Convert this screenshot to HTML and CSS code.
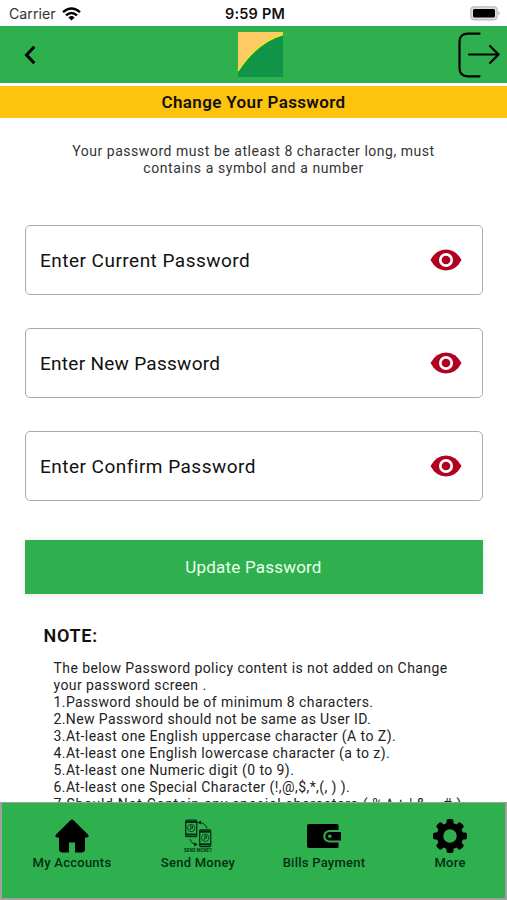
FILE: index.html
```html
<!DOCTYPE html>
<html lang="en">
<head>
<meta charset="utf-8">
<title>Change Your Password</title>
<link rel="stylesheet" href="styles.css">
</head>
<body>
<div class="app">
  <div class="status">
    <div class="carrier"><span>Carrier</span>
      <svg width="19" height="14" viewBox="0 0 19 14"><g fill="none" stroke="#000" stroke-width="2.4"><path d="M1 5.2Q9.500-2.200 18 5.200"/><path d="M4 8.300Q9.500 3.500 15 8.300"/></g><path d="M6.400 10.400Q9.500 7.800 12.600 10.400L9.500 13.600Z"/></svg>
    </div>
    <div class="clock">9:59 PM</div>
    <svg class="battery" width="31" height="15" viewBox="0 0 31 15"><rect x=".8" y=".8" width="26.400" height="13" rx="3.500" fill="#ddd" stroke="#bbb" stroke-width="1.200"/><rect x="3" y="3" width="22" height="8.600" rx="1.500"/><path d="M28.500 5Q31 7.300 28.500 9.600Z" fill="#aaa"/></svg>
  </div>
  <header class="header">
    <svg class="back" width="13" height="20" viewBox="0 0 13 20"><path d="M10.300 1.700L2.500 10l7.800 8.100" fill="none" stroke="#000" stroke-width="3"/></svg>
    <svg class="logo" width="45" height="45" viewBox="0 0 45 45"><path d="M0 0h45v45H0z" fill="#109447"/><path d="M0 0h45v2.500Q19 10 0 39z" fill="#fdca63"/><path d="M0 39Q19 10 45 2.500" fill="none" stroke="#e9ed18" stroke-width="1.500"/></svg>
    <svg class="logout" width="42" height="46" viewBox="0 0 42 46"><path d="M21.500 1.700H10Q1.500 1.700 1.500 10v26q0 8.300 8.500 8.300h11.500M11 22.500h29M32 14l8.500 8.500L32 31" fill="none" stroke="#000" stroke-width="2.200" stroke-linecap="round"/></svg>
  </header>
  <div class="title"><span>Change Your Password</span></div>
  <main>
    <p class="intro"><span class="i1">Your password must be atleast 8 character long, must</span><br><span class="i2">contains a symbol and a number</span></p>
    <div class="fields">
      <div class="field"><span class="f1">Enter Current Password</span><svg width="32" height="22" viewBox="0 0 32 22"><path d="M.5 11Q6 .5 16 .5T31.500 11Q26 21.500 16 21.500T.5 11" fill="#b00120"/><circle cx="16" cy="11" r="5.700" fill="#b00120" stroke="#fff" stroke-width="2.700"/></svg></div>
      <div class="field"><span class="f2">Enter New Password</span><svg width="32" height="22" viewBox="0 0 32 22"><path d="M.5 11Q6 .5 16 .5T31.500 11Q26 21.500 16 21.500T.5 11" fill="#b00120"/><circle cx="16" cy="11" r="5.700" fill="#b00120" stroke="#fff" stroke-width="2.700"/></svg></div>
      <div class="field"><span class="f3">Enter Confirm Password</span><svg width="32" height="22" viewBox="0 0 32 22"><path d="M.5 11Q6 .5 16 .5T31.500 11Q26 21.500 16 21.500T.5 11" fill="#b00120"/><circle cx="16" cy="11" r="5.700" fill="#b00120" stroke="#fff" stroke-width="2.700"/></svg></div>
    </div>
    <button class="update">Update Password</button>
    <h2>NOTE:</h2>
    <div class="policy">
      <div class="p1">The below Password policy content is not added on Change</div>
      <div class="p2">your password screen .</div>
      <div class="p3">1.Password should be of minimum 8 characters.</div>
      <div class="p4">2.New Password should not be same as User ID.</div>
      <div class="p5">3.At-least one English uppercase character (A to Z).</div>
      <div class="p6">4.At-least one English lowercase character (a to z).</div>
      <div class="p7">5.At-least one Numeric digit (0 to 9).</div>
      <div class="p8">6.At-least one Special Character (!,@,$,*,(, ) ).</div>
      <div class="p9">7.Should Not Contain any special characters ( %,^,+,|,&amp;,~,# )</div>
    </div>
  </main>
  <nav>
    <a><svg width="34" height="34" viewBox="0 0 34 34"><path d="M15.500 1.200q1.500-1.400 3 0L33 15.500q1.800 3-1.600 3H30V30q0 3.500-3.500 3.500H20V23.500h-6v10H7.500Q4 33.500 4 30V18.500H2.600q-3.400 0-1.600-3z"/></svg><span class="n1">My Accounts</span></a>
    <a><svg width="30" height="34" viewBox="0 0 30 34"><g fill="none" stroke="#052e12" stroke-width="1.300"><rect x="2.700" y="1.200" width="11" height="16.500" rx="1"/><rect x="16.700" y="11" width="11" height="16.500" rx="1"/><path d="M3 3h10M3 15.500h10M17 12.800h10M17 25.300h10" stroke-width="2"/><circle cx="8.200" cy="9" r="3.700" stroke-width=".8"/><circle cx="22.200" cy="18.800" r="3.700" stroke-width=".8"/><path d="M7 7.200h2.500v2H7.200V11M21 17h2.500v2h-2.300v1.800" stroke-width="1"/><path d="M16 3.500q6 0 8 6M7 20q1 5 7 5.500" stroke-width="1"/></g><path d="M14 3.500l4-2v4zM15 25.500l-4-2v4z" fill="#052e12"/><text x="15" y="32.800" text-anchor="middle" textLength="28" lengthAdjust="spacingAndGlyphs" class="tiny">SEND MONEY</text></svg><span class="n2">Send Money</span></a>
    <a><svg width="34" height="34" viewBox="0 0 34 34"><path d="M2 5H30q1.500 0 1.500 1.500v4.500H22.500a6.250 6.250 0 0 0 0 12.500h9v4.500Q31.500 29 30 29H2Q0 29 0 27V7Q0 5 2 5z"/><path fill-rule="evenodd" d="M22.500 13H34v8.500H22.500a4.250 4.250 0 0 1 0-8.500zm.3 2.500a1.800 1.800 0 1 0 0 3.600a1.800 1.800 0 0 0 0-3.600z"/></svg><span class="n3">Bills Payment</span></a>
    <a><svg width="34" height="34" viewBox="-17 -17 34 34"><circle r="10" fill="none" stroke="#000" stroke-width="6.500"/><g id="t"><rect x="-3.500" y="-17" width="7" height="6" rx="2"/><rect x="-3.500" y="11" width="7" height="6" rx="2"/><rect x="-17" y="-3.500" width="6" height="7" rx="2"/><rect x="11" y="-3.500" width="6" height="7" rx="2"/></g><use href="#t" transform="rotate(45)"/></svg><span class="n4">More</span></a>
  </nav>
</div>
</body>
</html>
```
FILE: styles.css
```css
*{box-sizing:border-box}
body{margin:0;background:#fff;color:#111;font-family:Roboto,sans-serif}
svg{display:block;flex:none;overflow:visible}
.app{width:507px;height:900px;display:flex;flex-direction:column;overflow:hidden}
.status{height:26px;flex:none;display:grid;grid-template-columns:1fr auto 1fr;align-items:center;padding:1px 6px 0 9px;font-family:Inter,sans-serif;font-size:14.200px}
.carrier{display:flex;align-items:center;gap:6px;color:#333}
.clock{font-weight:600;font-size:14.500px;letter-spacing:.2px}
.battery{justify-self:end}
.header{height:57px;flex:none;background:#2fb04f;display:grid;grid-template-columns:1fr auto 1fr;align-items:center;padding:0 7px 0 24px}
.logo{margin-left:-3px}
.logout{justify-self:end}
.title{height:32px;flex:none;margin-top:3px;background:#fec30d;font-size:17px;font-weight:600;line-height:33px;letter-spacing:.36px;text-align:center}
main{flex:1;min-height:0;overflow:hidden;display:flex;flex-direction:column;padding:0 24.500px}
.intro{margin:25px 0 0;text-align:center;font-size:14px;line-height:17px;color:#333;height:34px}
.i1{letter-spacing:.53px}
.i2{letter-spacing:.6px}
.fields{display:grid;gap:33px;margin-top:48px}
.field{height:70px;border:1.500px solid #aaa;border-radius:5px;display:flex;align-items:center;justify-content:space-between;padding:0 20px 0 14.500px;font-size:19px;white-space:nowrap}
.f1,.f3{letter-spacing:.48px}
.f2{letter-spacing:.28px}
.update{margin-top:39px;height:54px;flex:none;border:0;background:#2fb04f;color:#eaffea;font:17px Roboto,sans-serif;letter-spacing:.2px;box-shadow:0 1px 8px rgba(0,0,0,.1)}
h2{margin:30.500px 0 0 19px;font-size:18px;line-height:22px;font-weight:600;letter-spacing:.7px}
.policy{margin:13px 0 0 29px;font-size:14px;line-height:17.100px;color:#222;letter-spacing:.42px;white-space:nowrap}
.policy div{width:max-content}
.p4{letter-spacing:.38px}
.p5{letter-spacing:.45px}
.p9{letter-spacing:.7px}
nav{height:98px;flex:none;background:#2fb04f;border:2px solid #a0a0a0;border-top-width:1px;display:grid;grid-template-columns:repeat(4,126px);padding:16px 0 0 7px;overflow:hidden}
nav a{display:flex;flex-direction:column;align-items:center;gap:1px;font-size:13px;font-weight:500;line-height:17px;letter-spacing:.25px;color:#052e12;white-space:nowrap}
.tiny{font:700 5px "Liberation Sans",sans-serif;letter-spacing:0;fill:#052e12}
```
